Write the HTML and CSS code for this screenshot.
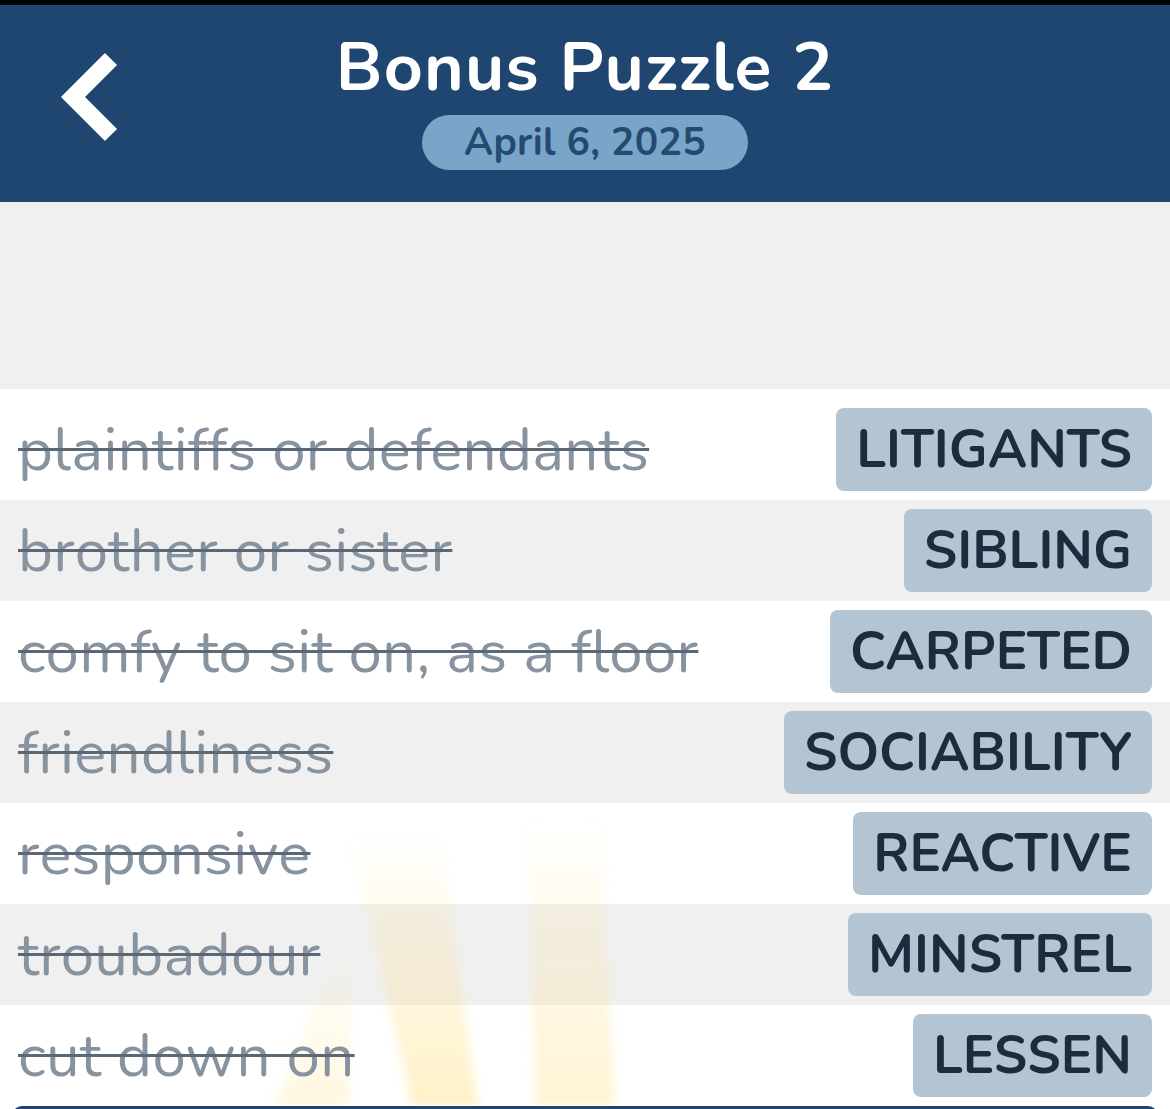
FILE: index.html
```html
<!DOCTYPE html>
<html>
<head>
<meta charset="utf-8">
<link rel="stylesheet" href="styles.css">
</head>
<body>
<div class="page">
  <div class="statusbar"></div>
  <header class="header">
    <svg class="back" width="130" height="197" viewBox="0 0 130 197">
      <polyline points="111,54 73,92 111,130" fill="none" stroke="#ffffff" stroke-width="17" stroke-linejoin="miter" stroke-linecap="butt"/>
    </svg>
    <h1 class="title">Bonus Puzzle 2</h1>
    <div class="date">April 6, 2025</div>
  </header>
  <div class="spacer"></div>
  <div class="list">
    <svg class="rays" width="1170" height="320" viewBox="0 0 1170 320">
      <defs>
        <linearGradient id="rg" x1="0" y1="0" x2="0" y2="1">
          <stop offset="0" stop-color="#ffe08a" stop-opacity="0"/>
          <stop offset="0.35" stop-color="#ffe08a" stop-opacity="0.2"/>
          <stop offset="1" stop-color="#ffd966" stop-opacity="0.36"/>
        </linearGradient>
        <filter id="bl" x="-20%" y="-20%" width="140%" height="140%">
          <feGaussianBlur stdDeviation="5"/>
        </filter>
      </defs>
      <g filter="url(#bl)">
        <polygon points="350,50 440,50 478,320 412,320" fill="url(#rg)"/>
        <polygon points="528,30 600,30 615,320 535,320" fill="url(#rg)" opacity="0.8"/>
        <polygon points="335,170 352,170 350,320 275,320" fill="url(#rg)" opacity="0.6"/>
      </g>
    </svg>
    <div class="row first white"><span class="clue">plaintiffs or defendants</span><span class="answer">LITIGANTS</span></div>
    <div class="row gray"><span class="clue">brother or sister</span><span class="answer">SIBLING</span></div>
    <div class="row white"><span class="clue">comfy to sit on, as a floor</span><span class="answer">CARPETED</span></div>
    <div class="row gray"><span class="clue">friendliness</span><span class="answer">SOCIABILITY</span></div>
    <div class="row white"><span class="clue">responsive</span><span class="answer">REACTIVE</span></div>
    <div class="row gray"><span class="clue">troubadour</span><span class="answer">MINSTREL</span></div>
    <div class="row white"><span class="clue">cut down on</span><span class="answer">LESSEN</span></div>
  </div>
  <div class="footer"></div>
</div>
</body>
</html>
```
FILE: styles.css
```css
html, body {
  margin: 0;
  padding: 0;
  background: #ffffff;
  overflow: hidden;
}
.page {
  width: 1170px;
  height: 1109px;
  overflow: hidden;
  font-family: "Nunito", "Lato", "Noto Sans", sans-serif;
  display: flex;
  flex-direction: column;
}
.statusbar {
  height: 5px;
  background: #000000;
  flex: none;
}
.header {
  position: relative;
  height: 197px;
  flex: none;
  background: #1f4670;
  display: flex;
  flex-direction: column;
  align-items: center;
}
.back {
  position: absolute;
  left: 0;
  top: 0;
}
.title {
  margin: 22px 0 0 0;
  color: #ffffff;
  font-size: 68px;
  font-weight: 700;
  line-height: 82px;
  letter-spacing: 1.2px;
}
.date {
  margin-top: 6px;
  width: 326px;
  height: 55px;
  border-radius: 28px;
  background: #7aa5c8;
  color: #244a72;
  font-size: 39px;
  font-weight: 700;
  display: flex;
  align-items: center;
  justify-content: center;
  letter-spacing: 0.3px;
}
.spacer {
  height: 187px;
  flex: none;
  background: #f0f0f0;
}
.list {
  position: relative;
  flex: none;
}
.rays {
  position: absolute;
  left: 0;
  bottom: 0;
  pointer-events: none;
  z-index: 1;
}
.row {
  height: 101px;
  display: flex;
  align-items: center;
  justify-content: space-between;
  padding: 0 18px;
}
.row.first {
  height: 111px;
  padding-top: 10px;
  box-sizing: border-box;
}
.white { background: #ffffff; }
.gray { background: #f0f0f0; }
.clue {
  color: #8893a0;
  font-size: 60px;
  font-weight: 400;
  letter-spacing: 0.3px;
  text-decoration: line-through;
  text-decoration-color: #5a6876;
  text-decoration-thickness: 3px;
  position: relative;
  z-index: 2;
}
.answer {
  height: 83px;
  box-sizing: border-box;
  padding: 0 20px;
  border-radius: 8px;
  background: #b3c5d3;
  color: #1b2c3d;
  font-size: 53px;
  font-weight: 700;
  display: flex;
  align-items: center;
  position: relative;
  z-index: 2;
}
.footer {
  margin: 0 12px;
  height: 40px;
  flex: none;
  background: #1f4670;
  border-radius: 10px 10px 0 0;
}
```
